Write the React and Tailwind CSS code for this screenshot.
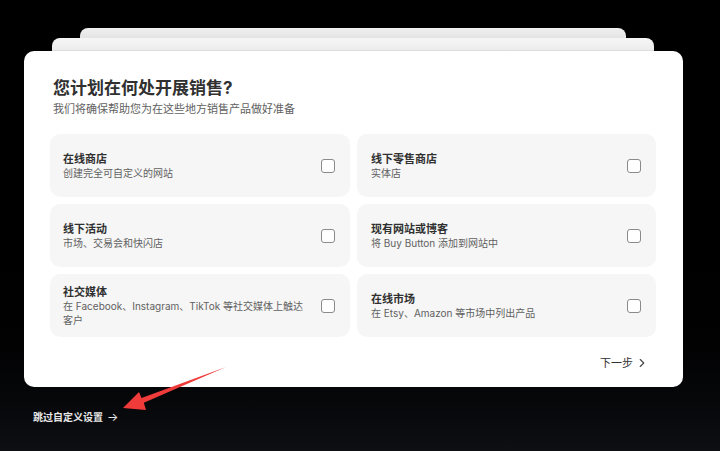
import { ChevronRight } from "lucide-react";

const options = [
  { title: "在线商店", desc: "创建完全可自定义的网站" },
  { title: "线下零售商店", desc: "实体店" },
  { title: "线下活动", desc: "市场、交易会和快闪店" },
  { title: "现有网站或博客", desc: "将 Buy Button 添加到网站中" },
  { title: "社交媒体", desc: "在 Facebook、Instagram、TikTok 等社交媒体上触达客户" },
  { title: "在线市场", desc: "在 Etsy、Amazon 等市场中列出产品" },
];

function OptionCard({ title, desc, right }) {
  return (
    <label
      className={`flex h-[63px] items-center gap-3 rounded-[10px] bg-[#f6f6f6] pr-[15px] ${
        right ? "pl-[14px]" : "pl-[13px]"
      }`}
    >
      <div className="min-w-0 flex-1">
        <div className="text-[11px] font-semibold leading-[14px] text-[#303030]">{title}</div>
        <div className="text-[10px] leading-[14px] text-[#616161]">{desc}</div>
      </div>
      <span className="h-[14px] w-[14px] shrink-0 rounded-[3px] border border-[#8a8a8a] bg-white" />
    </label>
  );
}

export default function App() {
  return (
    <div
      className="relative h-[451px] w-[720px] overflow-hidden bg-gradient-to-b from-black via-black to-[#0e0f13] pt-[28px]"
      style={{ fontFamily: '"Inter", "Noto Sans CJK SC", sans-serif' }}
    >
      {/* stacked cards behind */}
      <div className="ml-[80px] h-[10px] w-[546px] rounded-t-[8px] bg-gradient-to-b from-[#f0f0f0] to-[#e4e4e4]" />
      <div className="ml-[52px] h-[13px] w-[602px] rounded-t-[8px] border-b border-[#dcdcdc] bg-gradient-to-b from-[#f6f6f6] to-[#ececec]" />

      <div className="ml-[24px] w-[659px] rounded-[10px] bg-white px-[26px] pt-[25px] pb-[16px]">
        <h1 className="pl-[3px] text-[17px] font-bold leading-[24px] text-[#303030]">您计划在何处开展销售?</h1>
        <p className="mt-[1px] pl-[3px] text-[11px] leading-[16px] text-[#616161]">我们将确保帮助您为在这些地方销售产品做好准备</p>

        <div className="mt-[17px] grid grid-cols-[300px_299px] gap-[7px]">
          {options.map((o, i) => (
            <OptionCard key={o.title} {...o} right={i % 2 === 1} />
          ))}
        </div>

        <div className="mt-[18px] flex justify-end pr-[8px]">
          <button className="flex items-center gap-[2px] text-[11px] leading-[16px] text-[#303030]">
            下一步
            <ChevronRight size={14} strokeWidth={2} className="text-[#4a4a4a]" />
          </button>
        </div>
      </div>

      <div className="ml-[33px] mt-[22px] flex items-center gap-[4px] text-[10px] font-bold leading-[16px] text-[#e6e6e6]">
        跳过自定义设置
        <span className="text-[12px] font-normal">→</span>
      </div>

      {/* red annotation arrow */}
      <svg className="absolute left-0 top-0" width="720" height="451" viewBox="0 0 720 451">
        <polygon
          points="123,408 139,392 141.5,398 226,367 143.8,402.8 146,410"
          fill="#f03b3b"
        />
      </svg>
    </div>
  );
}
